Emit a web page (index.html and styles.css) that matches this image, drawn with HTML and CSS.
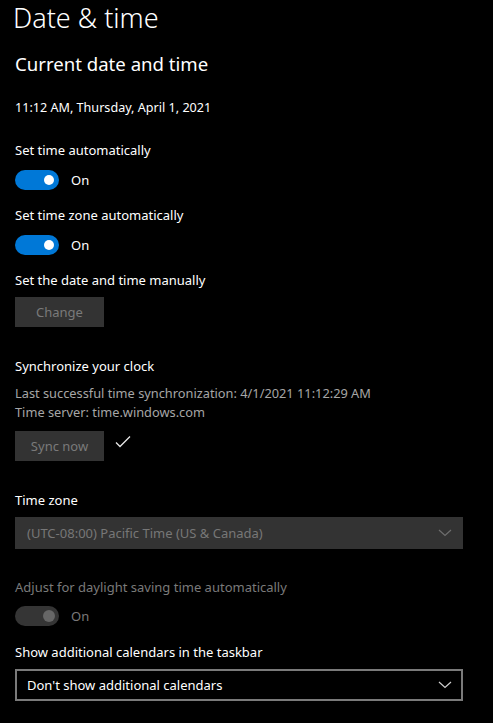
FILE: index.html
```html
<!DOCTYPE html>
<html lang="en">
<head>
    <meta charset="UTF-8">
    <meta name="viewport" content="width=device-width, initial-scale=1.0">
    <title>Date &amp; time</title>
    <link rel="stylesheet" href="styles.css">
</head>
<body>
    <div class="page">
        <h1>Date &amp; time</h1>
        <h2>Current date and time</h2>
        <p class="now">11:12 AM, Thursday, April 1, 2021</p>

        <div class="setting first">
            <div class="label">Set time automatically</div>
            <div class="toggle-row">
                <span class="toggle on"><span class="knob"></span></span>
                <span class="state">On</span>
            </div>
        </div>

        <div class="setting">
            <div class="label">Set time zone automatically</div>
            <div class="toggle-row">
                <span class="toggle on"><span class="knob"></span></span>
                <span class="state">On</span>
            </div>
        </div>

        <div class="setting">
            <div class="label">Set the date and time manually</div>
            <button class="btn" disabled>Change</button>
        </div>

        <div class="setting group">
            <div class="label">Synchronize your clock</div>
            <div class="info">
                <div>Last successful time synchronization: 4/1/2021 11:12:29 AM</div>
                <div>Time server: time.windows.com</div>
            </div>
            <div class="btn-row">
                <button class="btn" disabled>Sync now</button>
                <svg class="check" width="16" height="14" viewBox="0 0 16 14">
                    <path d="M1 7.5 L5 11.5 L15 1.5" fill="none" stroke="#e6e6e6" stroke-width="1.3"/>
                </svg>
            </div>
        </div>

        <div class="setting group">
            <div class="label">Time zone</div>
            <div class="select disabled">
                <span>(UTC-08:00) Pacific Time (US &amp; Canada)</span>
                <svg class="chevron" width="14" height="8" viewBox="0 0 14 8">
                    <path d="M1 1 L7 6.5 L13 1" fill="none" stroke="#6e6e6e" stroke-width="1.2"/>
                </svg>
            </div>
        </div>

        <div class="setting dst">
            <div class="label muted">Adjust for daylight saving time automatically</div>
            <div class="toggle-row">
                <span class="toggle off"><span class="knob"></span></span>
                <span class="state muted">On</span>
            </div>
        </div>

        <div class="setting cal">
            <div class="label">Show additional calendars in the taskbar</div>
            <div class="select">
                <span>Don't show additional calendars</span>
                <svg class="chevron" width="14" height="8" viewBox="0 0 14 8">
                    <path d="M1 1 L7 6.5 L13 1" fill="none" stroke="#cfcfcf" stroke-width="1.2"/>
                </svg>
            </div>
        </div>
    </div>
</body>
</html>
```

FILE: styles.css
```css
body {
    margin: 0;
    background-color: #000;
    color: #fff;
    font-family: "Noto Sans", "Open Sans", Arial, sans-serif;
    font-size: 14px;
    line-height: 20px;
}
.page {
    padding: 0 30px 0 15px;
}
h1 {
    margin: 0 0 0 -2px;
    padding-top: 2px;
    font-size: 27px;
    font-weight: 300;
    line-height: 32px;
}
h2 {
    margin: 16px 0 0;
    font-size: 18.6px;
    font-weight: 400;
    line-height: 28px;
}
.now {
    margin: 20px 0 0;
    font-size: 12.6px;
}
.setting {
    margin-top: 15px;
}
.setting.first {
    margin-top: 22px;
}
.setting.group {
    margin-top: 29px;
}
.setting.dst {
    margin-top: 28px;
}
.setting.cal {
    margin-top: 16px;
}
.label {
    font-size: 13px;
}
.muted {
    color: #7a7a7a;
}
.toggle-row {
    display: flex;
    align-items: center;
    gap: 12px;
    margin-top: 10px;
    height: 20px;
}
.setting.dst .toggle-row {
    margin-top: 9px;
}
.toggle {
    width: 44px;
    height: 20px;
    border-radius: 10px;
    display: flex;
    align-items: center;
    justify-content: flex-end;
    padding-right: 5px;
    box-sizing: border-box;
}
.toggle.on {
    background-color: #0078d7;
}
.toggle.off {
    background-color: #353535;
    padding-right: 4px;
}
.knob {
    width: 10px;
    height: 10px;
    border-radius: 50%;
    background-color: #fff;
}
.toggle.off .knob {
    width: 12px;
    height: 12px;
    background-color: #666;
}
.state {
    font-size: 13px;
}
.btn {
    display: block;
    margin-top: 7px;
    width: 89px;
    height: 30px;
    border: none;
    background-color: #333;
    color: #7a7a7a;
    font-family: inherit;
    font-size: 13px;
    padding: 0;
}
.info {
    margin-top: 8px;
    color: #a6a6a6;
    font-size: 12.8px;
    line-height: 19px;
}
.btn-row {
    display: flex;
    align-items: center;
    gap: 11px;
    margin-top: 9px;
}
.btn-row .btn {
    margin-top: 0;
}
.check {
    margin-top: -9px;
}
.select {
    margin-top: 7px;
    height: 32px;
    width: 448px;
    box-sizing: border-box;
    border: 2px solid #7a7a7a;
    display: flex;
    align-items: center;
    justify-content: space-between;
    padding: 0 9px 0 10px;
    font-size: 13px;
}
.select.disabled {
    background-color: #333;
    border-color: #333;
    color: #777;
}
.chevron {
    flex: none;
}
```
